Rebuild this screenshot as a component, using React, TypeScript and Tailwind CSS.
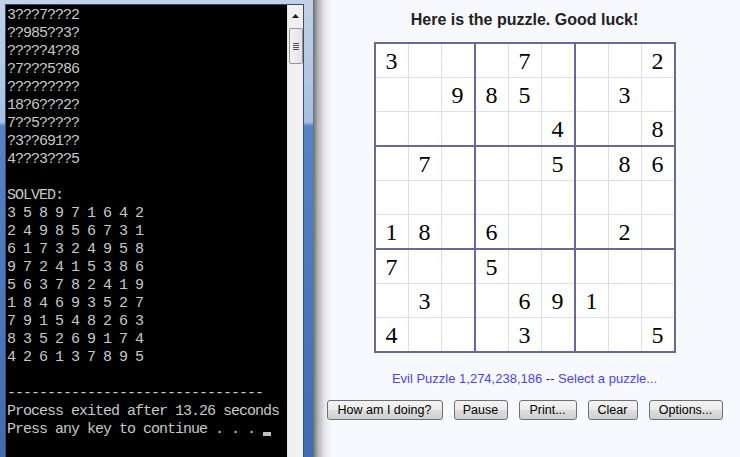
import React from 'react';

const puzzle = [
  '3???7???2',
  '??985??3?',
  '?????4??8',
  '?7???5?86',
  '?????????',
  '18?6???2?',
  '7??5?????',
  '?3??691??',
  '4???3???5',
];

const solved = [
  '358971642',
  '249856731',
  '617324958',
  '972415386',
  '563782419',
  '184693527',
  '791548263',
  '835269174',
  '426137895',
];

const consoleLines = [
  ...puzzle,
  '',
  'SOLVED:',
  ...solved.map(r => r.split('').join(' ')),
  '',
  '--------------------------------',
  'Process exited after 13.26 seconds',
];

const Scrollbar: React.FC = () => (
  <div className="w-[16px] shrink-0 bg-[#f0f0f0] border-l border-[#e4e4e4] flex flex-col items-center">
    <div className="h-[20px] flex items-center justify-center pt-[2px]">
      <svg width="7" height="4" viewBox="0 0 7 4">
        <path d="M3.5 0 L7 4 L0 4 Z" fill="#202020" />
      </svg>
    </div>
    <div className="mt-[3px] w-[14px] h-[36px] rounded-[2px] border border-[#979797] bg-[linear-gradient(to_right,#f3f3f3,#e2e2e2)] flex flex-col items-center justify-center gap-[1px]">
      <div className="w-[6px] h-[1px] bg-[#555]" />
      <div className="w-[6px] h-[1px] bg-[#555]" />
      <div className="w-[6px] h-[1px] bg-[#555]" />
      <div className="w-[6px] h-[1px] bg-[#555]" />
    </div>
  </div>
);

const ConsoleWindow: React.FC = () => (
  <div className="w-[313px] shrink-0 flex pt-[4px] pl-[5px] pr-[9px] bg-[linear-gradient(to_bottom,#c0d2e8_0px,#a6c0e3_122px,#5583c7_126px,#3f6cb3_100%)]">
    <div className="flex flex-1 border-t border-l border-r border-[#3d4d62]">
      <div className="flex-1 bg-black pt-[2px] pl-[1px] overflow-hidden">
        <pre className="font-['Liberation_Mono',monospace] text-[15px] leading-[18px] tracking-[-1px] text-[#c8c8c8] whitespace-pre">
          {consoleLines.map((l, i) => (
            <div key={i} className="h-[18px]">{l}</div>
          ))}
          <div className="h-[18px]">
            Press any key to continue . . . <span className="inline-block w-[8px] h-[4px] bg-[#c0c0c0] mb-[-3px]" />
          </div>
        </pre>
      </div>
      <Scrollbar />
    </div>
  </div>
);

const Box: React.FC<{ br: number; bc: number }> = ({ br, bc }) => {
  const cells = [];
  for (let r = 0; r < 3; r++) {
    for (let c = 0; c < 3; c++) {
      const ch = puzzle[br * 3 + r][bc * 3 + c];
      cells.push(
        <div key={`${r}-${c}`} className="w-[32px] h-[33px] bg-white flex items-center justify-center font-['Liberation_Serif',serif] text-[24px] text-black">
          {ch === '?' ? '' : ch}
        </div>
      );
    }
  }
  return <div className="grid grid-cols-3 gap-[1px] bg-[#dddded]">{cells}</div>;
};

const buttons = [
  { label: 'How am I doing?', w: 'w-[116px]' },
  { label: 'Pause', w: 'w-[54px]' },
  { label: 'Print...', w: 'w-[58px]' },
  { label: 'Clear', w: 'w-[50px]' },
  { label: 'Options...', w: 'w-[74px]' },
];

export default function App() {
  return (
    <div className="flex h-[457px] w-[740px] overflow-hidden bg-[#f8f8ff]">
      <ConsoleWindow />
      <div className="flex-1 flex flex-col items-center pt-[11px] pr-[4px] bg-[linear-gradient(to_right,#6c6c6c,#b4b4b8_5px,#e8e8ee_12px,#f8f8ff_20px)]">
        <h2 className="font-['Liberation_Sans',Arial,sans-serif] font-bold text-[16px] leading-[18px] text-[#222]">
          Here is the puzzle. Good luck!
        </h2>
        <div className="mt-[13px] grid grid-cols-3 gap-[2px] p-[2px] bg-[#68689a]">
          {[0, 1, 2].map(br => [0, 1, 2].map(bc => <Box key={`${br}${bc}`} br={br} bc={bc} />))}
        </div>
        <p className="mt-[18px] font-['Liberation_Sans',Arial,sans-serif] text-[13px] leading-[15px] text-[#4444ff]">
          Evil Puzzle 1,274,238,186 <span className="text-[#333]">--</span> Select a puzzle...
        </p>
        <div className="mt-[14px] flex gap-[11px]">
          {buttons.map(b => (
            <button
              key={b.label}
              className={`${b.w} h-[20px] rounded-[3px] border border-[#707070] bg-[linear-gradient(to_bottom,#f2f2f2_0%,#ebebeb_50%,#dddddd_51%,#cfcfcf_100%)] font-['Liberation_Sans',Arial,sans-serif] text-[12.5px] leading-[18px] text-black`}
            >
              {b.label}
            </button>
          ))}
        </div>
      </div>
    </div>
  );
}
